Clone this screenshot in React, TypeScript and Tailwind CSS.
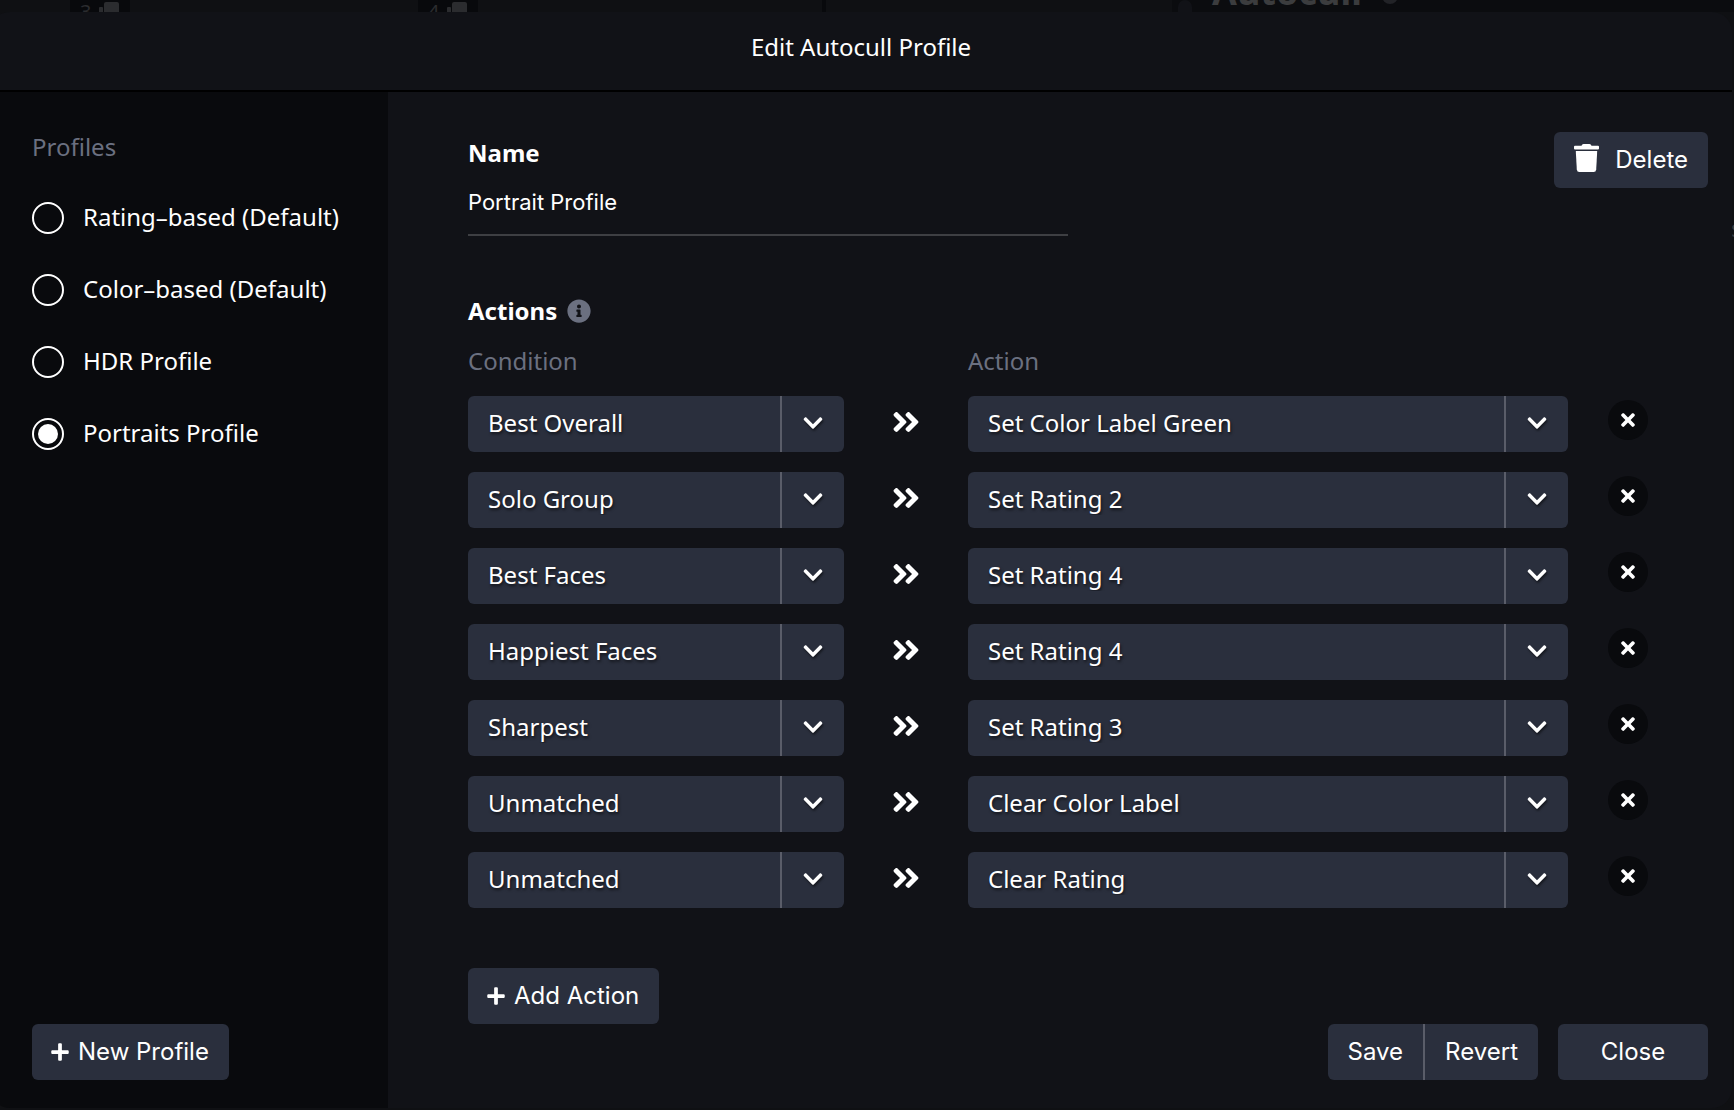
import { FaAngleDoubleRight, FaChevronDown, FaInfoCircle, FaPlus, FaTimes } from "react-icons/fa";

const profiles = [
  "Rating–based (Default)",
  "Color–based (Default)",
  "HDR Profile",
  "Portraits Profile",
];

const rules = [
  { condition: "Best Overall", action: "Set Color Label Green" },
  { condition: "Solo Group", action: "Set Rating 2" },
  { condition: "Best Faces", action: "Set Rating 4" },
  { condition: "Happiest Faces", action: "Set Rating 4" },
  { condition: "Sharpest", action: "Set Rating 3" },
  { condition: "Unmatched", action: "Clear Color Label" },
  { condition: "Unmatched", action: "Clear Rating" },
];

const conditions = ["Best Overall", "Solo Group", "Best Faces", "Happiest Faces", "Sharpest", "Unmatched"];
const actions = [
  "Set Color Label Green",
  "Set Rating 2",
  "Set Rating 3",
  "Set Rating 4",
  "Clear Color Label",
  "Clear Rating",
];

const button =
  "flex h-14 items-center bg-[#2a2f3d] font-['Inter','Liberation_Sans',sans-serif] text-2xl text-white";

function TrashIcon() {
  return (
    <svg viewBox="0 0 25 28" className="mb-1 h-7 w-[25px]" fill="currentColor" aria-hidden="true">
      <path d="M1 1.700h6.500Q8 0 9.500 0h6Q17 0 17.500 1.700H24q1 0 1 1v1.800q0 1-1 1H1q-1 0-1-1V2.700q0-1 1-1z" />
      <path d="M1.800 7h21.400l-1 18.500Q22 28 19.600 28H5.400Q3 28 2.800 25.500z" />
    </svg>
  );
}

function Dropdown({ label, value, options }: { label: string; value: string; options: string[] }) {
  return (
    <div className="relative h-14 overflow-hidden rounded-md bg-[#2a2f3d]">
      <select
        aria-label={label}
        defaultValue={value}
        className="h-full w-full appearance-none pr-16 pb-0.5 pl-5 text-white [text-shadow:1px_2px_3px_rgba(0,0,0,0.6)]"
      >
        {options.map((option) => (
          <option key={option}>{option}</option>
        ))}
      </select>
      <span className="pointer-events-none absolute inset-y-0 right-0 flex w-16 items-center justify-center border-l-2 border-[#5a5d69] pb-0.5">
        <FaChevronDown className="size-[22px] drop-shadow-[1px_2px_1px_rgba(0,0,0,0.5)]" />
      </span>
    </div>
  );
}

function Backdrop() {
  return (
    <div className="flex h-3 overflow-hidden text-[#2b2c2f]" aria-hidden="true">
      <div className="flex w-[822px] gap-72 pl-[70px]">
        <Count value="3" />
        <Count value="4" />
      </div>
      <div className="w-1 bg-[#08090c]" />
      <div className="w-[346px]" />
      <div className="flex flex-1 items-start bg-[#0b0c0f]">
        <div className="ml-1.5 h-5 w-3.5 rounded-t-full bg-[#111217]" />
        <div className="-mt-7 ml-5 text-4xl leading-10 font-bold text-[#3b3c3e]">Autocull</div>
        <div className="-mt-3 ml-5 size-4 rounded-full bg-[#222327]" />
      </div>
      <span className="absolute top-[212px] left-full -ml-[3px] text-[#3b3c3e]">s</span>
    </div>
  );
}

function Count({ value }: { value: string }) {
  return (
    <div className="flex h-8 w-[60px] items-start gap-2 bg-[#08090c] pl-2.5 text-xl leading-6">
      {value}
      <svg viewBox="0 0 20 20" className="mt-0.5 size-5" fill="currentColor">
        <rect x="0" y="5" width="4" height="14" rx="1" />
        <rect x="5" y="0" width="15" height="18" rx="2" />
      </svg>
    </div>
  );
}

export default function App() {
  return (
    <div className="relative flex min-h-screen flex-col overflow-hidden bg-[#0f1013] pb-0.5 font-['Noto_Sans','Open_Sans',sans-serif] text-2xl leading-8 text-white">
      <Backdrop />
      <div
        role="dialog"
        aria-labelledby="title"
        className="relative mr-0.5 -ml-2.5 flex flex-1 flex-col overflow-hidden rounded-[20px] bg-[#111217]"
      >
        <header className="flex h-20 items-center justify-center border-b-2 border-black pb-2">
          <h1 id="title">Edit Autocull Profile</h1>
        </header>

        <div className="flex flex-1">
          <aside className="flex w-[398px] flex-col items-start bg-[#090a0d] pt-[39px] pb-7 pl-[42px]">
            <fieldset>
              <legend className="text-[#6b7080]">Profiles</legend>
              <div className="mt-[39px] flex flex-col gap-10">
                {profiles.map((profile) => (
                  <label key={profile} className="flex h-8 items-center gap-[19px] leading-[30px] whitespace-nowrap">
                    <input
                      type="radio"
                      name="profile"
                      defaultChecked={profile === "Portraits Profile"}
                      className="grid size-8 shrink-0 appearance-none place-items-center rounded-full border-2 border-white before:size-5 before:rounded-full checked:before:bg-white"
                    />
                    <span className="pb-0.5">{profile}</span>
                  </label>
                ))}
              </div>
            </fieldset>
            <button type="button" className={`${button} mt-auto gap-2 rounded-md pr-5 pl-[18px]`}>
              <FaPlus className="size-5" />
              New Profile
            </button>
          </aside>

          <main className="flex flex-1 flex-col pt-10 pr-6 pb-7 pl-20">
            <div className="flex items-start justify-between">
              <div className="flex w-[600px] flex-col">
                <label htmlFor="name" className="mt-[5px] font-bold">
                  Name
                </label>
                <input
                  id="name"
                  defaultValue="Portrait Profile"
                  className="h-[67px] border-b-2 border-[#3e3f43] font-['Inter','Liberation_Sans',sans-serif] text-[22px]"
                />
              </div>
              <button type="button" className={`${button} gap-4 rounded-md px-5`}>
                <TrashIcon />
                Delete
              </button>
            </div>

            <section className="mt-[59px]">
              <h2 className="flex items-center gap-2.5 font-bold">
                Actions
                <FaInfoCircle className="size-6 text-[#6b7080]" />
              </h2>
              <div className="mt-[18px] grid grid-cols-[376px_124px_600px_1fr] text-[#6b7080]">
                <span>Condition</span>
                <span className="col-start-3">Action</span>
              </div>
              <ul className="mt-[19px] flex flex-col gap-5">
                {rules.map((rule, index) => (
                  <li key={index} className="grid grid-cols-[376px_124px_600px_1fr]">
                    <Dropdown label="Condition" value={rule.condition} options={conditions} />
                    <FaAngleDoubleRight className="mt-2.5 size-8 justify-self-center" />
                    <Dropdown label="Action" value={rule.action} options={actions} />
                    <button
                      type="button"
                      aria-label="Remove action"
                      className="mt-1 ml-10 grid size-10 place-items-center rounded-full bg-[#090a0d]"
                    >
                      <FaTimes className="size-5" />
                    </button>
                  </li>
                ))}
              </ul>
            </section>

            <button type="button" className={`${button} mt-[60px] gap-2 self-start rounded-md pr-5 pl-[18px]`}>
              <FaPlus className="size-5" />
              Add Action
            </button>

            <footer className="mt-auto flex justify-end gap-5">
              <div className="flex divide-x-2 divide-[#5a5d69] overflow-hidden rounded-md">
                <button type="button" className={`${button} px-5`}>
                  Save
                </button>
                <button type="button" className={`${button} px-5`}>
                  Revert
                </button>
              </div>
              <button type="button" className={`${button} w-[150px] justify-center rounded-md`}>
                Close
              </button>
            </footer>
          </main>
        </div>
      </div>
    </div>
  );
}
